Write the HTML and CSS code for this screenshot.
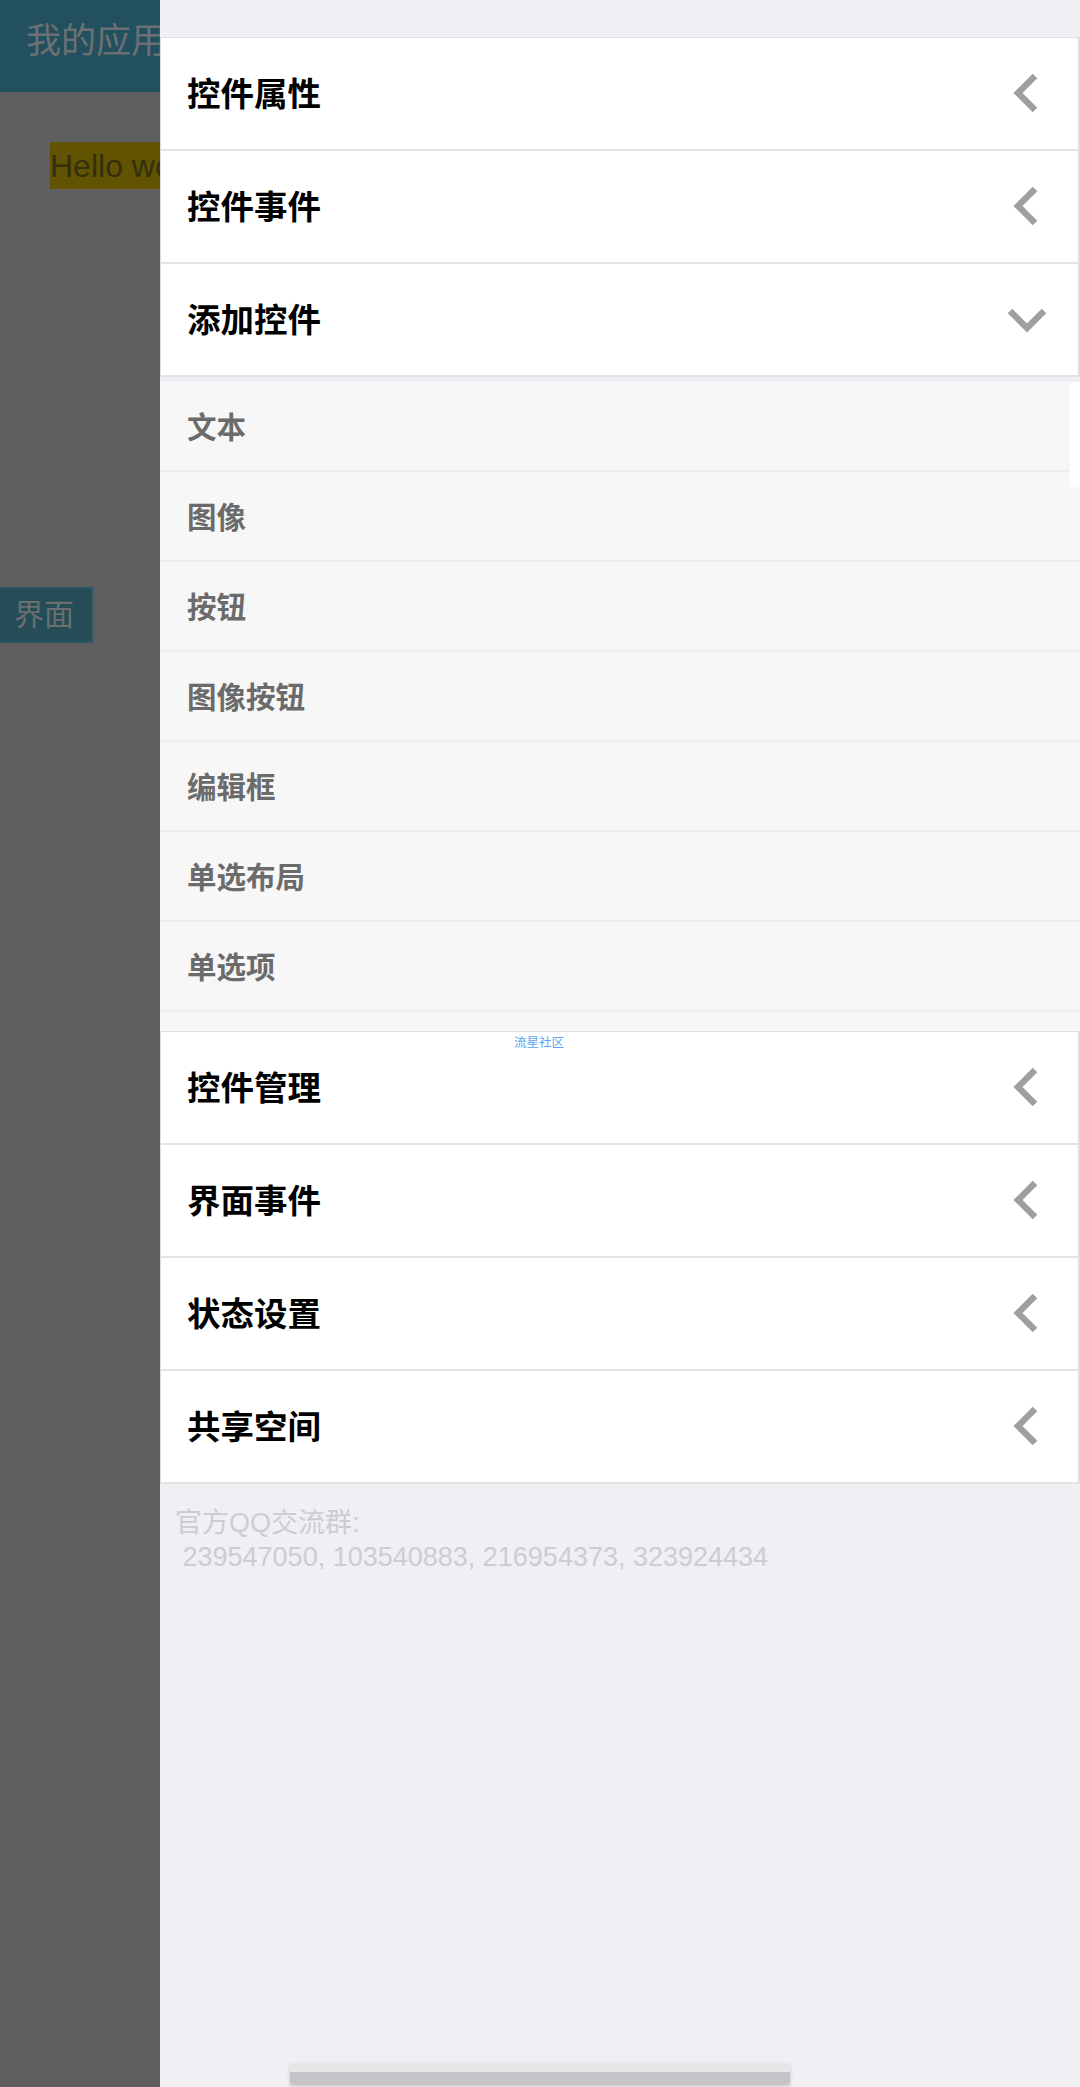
FILE: index.html
```html
<!DOCTYPE html>
<html lang="zh-CN">
<head>
    <meta charset="UTF-8">
    <meta name="viewport" content="width=device-width, initial-scale=1.0">
    <title>我的应用</title>
    <link rel="stylesheet" href="styles.css">
</head>
<body>
    <div class="screen">
        <!-- App behind the drawer, dimmed -->
        <div class="app-shade">
            <div class="app-header">我的应用</div>
            <div class="hello"><span>Hello world</span></div>
            <div class="page-tab">界面</div>
        </div>

        <!-- Side drawer -->
        <div class="drawer">
            <div class="menu-group">
                <div class="menu-row">
                    <span class="menu-title">控件属性</span>
                    <svg class="chevron" viewBox="0 0 40 40"><polyline points="28,3 11,20 28,37"/></svg>
                </div>
                <div class="menu-row">
                    <span class="menu-title">控件事件</span>
                    <svg class="chevron" viewBox="0 0 40 40"><polyline points="28,3 11,20 28,37"/></svg>
                </div>
                <div class="menu-row">
                    <span class="menu-title">添加控件</span>
                    <svg class="chevron" viewBox="0 0 40 40"><polyline points="3,12 20,29 37,12"/></svg>
                </div>
            </div>

            <div class="widget-list">
                <div class="widget-item">文本</div>
                <div class="widget-item">图像</div>
                <div class="widget-item">按钮</div>
                <div class="widget-item">图像按钮</div>
                <div class="widget-item">编辑框</div>
                <div class="widget-item">单选布局</div>
                <div class="widget-item">单选项</div>
                <div class="scroll-thumb"></div>
            </div>

            <div class="menu-group">
                <div class="menu-row">
                    <span class="menu-title">控件管理</span>
                    <svg class="chevron" viewBox="0 0 40 40"><polyline points="28,3 11,20 28,37"/></svg>
                    <span class="watermark">流星社区</span>
                </div>
                <div class="menu-row">
                    <span class="menu-title">界面事件</span>
                    <svg class="chevron" viewBox="0 0 40 40"><polyline points="28,3 11,20 28,37"/></svg>
                </div>
                <div class="menu-row">
                    <span class="menu-title">状态设置</span>
                    <svg class="chevron" viewBox="0 0 40 40"><polyline points="28,3 11,20 28,37"/></svg>
                </div>
                <div class="menu-row">
                    <span class="menu-title">共享空间</span>
                    <svg class="chevron" viewBox="0 0 40 40"><polyline points="28,3 11,20 28,37"/></svg>
                </div>
            </div>

            <div class="qq-info">
                官方QQ交流群:<br>&nbsp;239547050, 103540883, 216954373, 323924434
            </div>

            <div class="h-scrollbar"></div>
        </div>
    </div>
</body>
</html>
```

FILE: styles.css
```css
* {
    margin: 0;
    padding: 0;
    box-sizing: border-box;
}

body {
    font-family: "Liberation Sans", "Noto Sans CJK SC", sans-serif;
    background-color: #efeff4;
    width: 1080px;
    height: 2087px;
    overflow: hidden;
}

.screen {
    display: flex;
    height: 2087px;
}

/* === DIMMED APP === */
.app-shade {
    width: 160px;
    flex-shrink: 0;
    background-color: #5f5f61;
    overflow: hidden;
    white-space: nowrap;
}

.app-header {
    height: 92px;
    background-color: #22505e;
    color: #6b7074;
    font-size: 35px;
    line-height: 46px;
    padding: 18px 0 0 26px;
}

.hello {
    margin: 50px 0 0 50px;
    width: 200px;
    height: 47px;
    background-color: #625300;
    color: #33300f;
    font-size: 32px;
    line-height: 48px;
}

.page-tab {
    margin-top: 398px;
    width: 93px;
    height: 56px;
    background-color: #244d58;
    border: 2px solid #2a5763;
    border-left: none;
    color: #6c6e6f;
    font-size: 30px;
    line-height: 52px;
    padding-left: 14px;
}

/* === DRAWER === */
.drawer {
    flex: 1;
    display: flex;
    flex-direction: column;
    background-color: #efeff4;
    padding-top: 37px;
}

.menu-group {
    border-top: 1px solid #e0e0e0;
}

.menu-row {
    position: relative;
    height: 113px;
    display: flex;
    align-items: center;
    justify-content: space-between;
    background-color: #fff;
    border-left: 1px solid #dedede;
    border-right: 2px solid #dedede;
    border-bottom: 2px solid #e3e3e3;
    padding: 0 31px 5px 26px;
}

.menu-title {
    font-size: 33.5px;
    font-weight: bold;
    color: #000;
}

.chevron {
    width: 40px;
    height: 40px;
    margin-top: 4px;
    fill: none;
    stroke: #9f9f9f;
    stroke-width: 6.5;
}

.watermark {
    position: absolute;
    top: 5px;
    left: 353px;
    font-size: 12.5px;
    line-height: 13px;
    color: #5aa5ee;
}

.widget-list {
    position: relative;
    margin-top: 5px;
    height: 649px;
    overflow: hidden;
    background-color: #f7f7f7;
}

.widget-item {
    height: 90px;
    display: flex;
    align-items: center;
    padding: 0 0 2px 27px;
    border-bottom: 2px solid #eeeeee;
    font-size: 29.5px;
    font-weight: bold;
    color: #6b6b6b;
}

.scroll-thumb {
    position: absolute;
    top: -1px;
    right: 0;
    width: 10px;
    height: 107px;
    border-radius: 5px;
    background-color: #fff;
}

.qq-info {
    margin-top: 22px;
    padding-left: 15px;
    font-size: 27px;
    line-height: 34px;
    color: #cdcdd1;
}

.h-scrollbar {
    margin: auto 0 2px 130px;
    width: 500px;
    height: 22px;
    border-radius: 3px;
    background: linear-gradient(#e6e6e9 0, #e6e6e9 9px, #c4c3c8 9px, #c4c3c8 100%);
    box-shadow: 0 2px 4px rgba(0, 0, 0, 0.15);
}
```
